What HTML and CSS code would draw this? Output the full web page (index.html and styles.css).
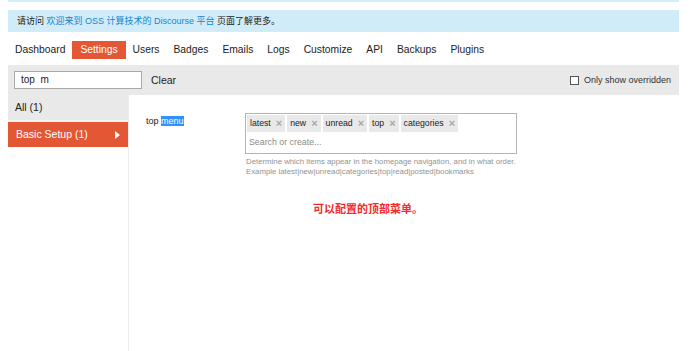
FILE: index.html
```html
<!DOCTYPE html>
<html lang="zh">
<head>
<meta charset="utf-8">
<title>Settings</title>
<link rel="stylesheet" href="styles.css">
</head>
<body>
<div class="page">
  <div class="topstrip"></div>
  <div class="notice">请访问 <a class="link" href="#">欢迎来到 OSS 计算技术的 Discourse 平台</a> 页面了解更多。</div>
  <ul class="nav">
    <li>Dashboard</li>
    <li class="active">Settings</li>
    <li>Users</li>
    <li>Badges</li>
    <li>Emails</li>
    <li>Logs</li>
    <li>Customize</li>
    <li>API</li>
    <li>Backups</li>
    <li>Plugins</li>
  </ul>
  <div class="bar">
    <div class="search">top&nbsp; m</div>
    <span class="clear">Clear</span>
    <label class="override"><span class="checkbox"></span>Only show overridden</label>
  </div>
  <div class="main">
    <ul class="side">
      <li class="side-item">All <span class="count">(1)</span></li>
      <li class="side-item current">Basic Setup <span class="count">(1)</span><span class="arrow"></span></li>
    </ul>
    <div class="content">
      <div class="setting">
        <div class="label">top <span class="sel">menu</span></div>
        <div class="value">
          <div class="tagbox">
            <div class="chips">
              <span class="chip">latest<span class="x">×</span></span>
              <span class="chip">new<span class="x">×</span></span>
              <span class="chip">unread<span class="x">×</span></span>
              <span class="chip">top<span class="x">×</span></span>
              <span class="chip">categories<span class="x">×</span></span>
            </div>
            <div class="placeholder">Search or create...</div>
          </div>
          <div class="desc">Determine which items appear in the homepage navigation, and in what order.<br>Example latest|new|unread|categories|top|read|posted|bookmarks</div>
        </div>
      </div>
      <div class="note">可以配置的顶部菜单。</div>
    </div>
  </div>
</div>
</body>
</html>
```
FILE: styles.css
```css
html, body {
  margin: 0;
  padding: 0;
  background: #fff;
}
body {
  font-family: "Liberation Sans", Arial, "Noto Sans CJK SC", sans-serif;
  color: #222;
}
.page {
  margin-left: 8px;
  width: 671px;
  height: 351px;
  display: flex;
  flex-direction: column;
}
.topstrip {
  height: 2px;
  background: #d4eefa;
}
.notice {
  margin-top: 8px;
  height: 22px;
  line-height: 22px;
  background: #d1ecf9;
  padding-left: 9px;
  font-size: 9px;
}
.link {
  color: #1387ce;
  text-decoration: none;
}
.nav {
  list-style: none;
  margin: 9px 0 0 0;
  padding: 0;
  display: flex;
  height: 18px;
}
.nav li {
  font-size: 10.3px;
  line-height: 18px;
  padding: 0 7px;
  color: #222;
}
.nav li.active {
  background: #e45735;
  color: #fff;
  padding: 0 8px;
}
.bar {
  margin-top: 6px;
  height: 30px;
  background: #e9e9e9;
  display: flex;
  align-items: center;
  font-size: 10.5px;
}
.search {
  margin-left: 6px;
  width: 120px;
  height: 16px;
  line-height: 16px;
  padding-left: 6px;
  background: #fff;
  border: 1px solid #aaa;
  font-size: 10px;
}
.clear {
  margin-left: 9px;
}
.override {
  margin-left: auto;
  margin-right: 8px;
  display: flex;
  align-items: center;
  font-size: 9px;
  color: #333;
}
.checkbox {
  width: 7px;
  height: 7px;
  border: 1px solid #555;
  background: #fff;
  margin-right: 5px;
}
.main {
  flex: 1;
  display: flex;
}
.side {
  list-style: none;
  margin: 0;
  padding: 0;
  width: 120px;
}
.side-item {
  height: 25px;
  line-height: 25px;
  background: #e9e9e9;
  border-bottom: 2px solid #f4f4f4;
  padding-left: 7px;
  font-size: 10.5px;
  position: relative;
}
.side-item.current {
  background: #e45735;
  color: #fff;
  padding-left: 8px;
  border-bottom: 0;
}
.arrow {
  position: absolute;
  right: 8px;
  top: 9px;
  width: 0;
  height: 0;
  border-left: 5px solid #fff;
  border-top: 4.5px solid transparent;
  border-bottom: 4.5px solid transparent;
}
.content {
  flex: 1;
  border-left: 1px solid #ececec;
  padding-top: 18px;
}
.setting {
  display: flex;
}
.label {
  width: 99px;
  padding-left: 17px;
  padding-top: 2px;
  font-size: 9px;
  line-height: 12px;
}
.sel {
  background: #3390ff;
  color: #fff;
}
.tagbox {
  width: 270px;
  height: 39px;
  border: 1px solid #b5b5b5;
}
.chips {
  display: flex;
  gap: 2px;
  padding: 1px 0 0 1px;
}
.chip {
  height: 17px;
  line-height: 17px;
  background: #e9e9e9;
  padding: 0 3px;
  font-size: 8.7px;
  color: #222;
  display: flex;
  align-items: center;
}
.x {
  color: #a8a8a8;
  font-size: 11px;
  font-weight: bold;
  margin-left: 5px;
  line-height: 17px;
}
.placeholder {
  font-size: 8.8px;
  color: #8a8a8a;
  padding-left: 3px;
  line-height: 21px;
}
.desc {
  margin-top: 3px;
  font-size: 7.8px;
  line-height: 10px;
  color: #929292;
  padding-left: 1px;
}
.note {
  margin-top: 23px;
  margin-left: 184px;
  font-family: "Noto Sans CJK SC", sans-serif;
  font-weight: bold;
  font-size: 11px;
  color: #f52a2a;
}
```
